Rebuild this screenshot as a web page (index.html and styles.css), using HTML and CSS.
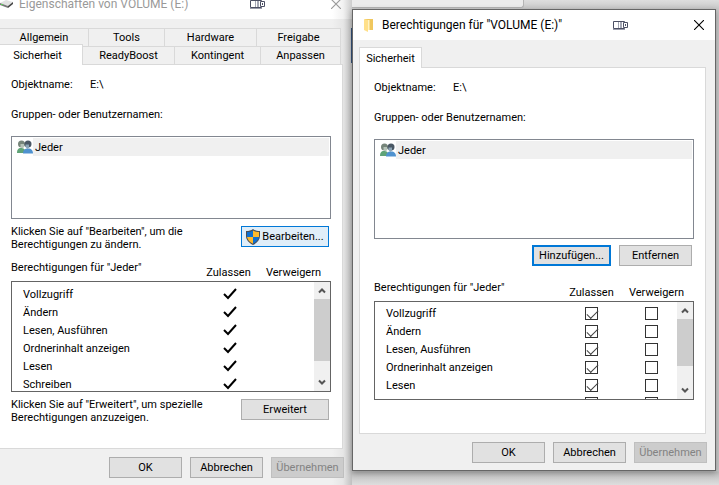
FILE: index.html
```
<!DOCTYPE html>
<html lang="de">

<head>
  <meta charset="utf-8">
  <title>Berechtigungen</title>
  <link rel="stylesheet" href="styles.css">
</head>

<body>
  <svg class="sprite" aria-hidden="true">
    <symbol id="close" viewBox="0 0 10 10">
      <path d="M0 0 10 10M10 0 0 10" fill="none" stroke="currentColor" stroke-width="1.1" />
    </symbol>
    <symbol id="dock" viewBox="0 0 16 11">
      <path d="M.5 1.500h11v7H.5z" fill="#fff" stroke="#4c5064" />
      <path d="M5 2h1v6H5zM7 2h2v6H7z" fill="#a5a8b5" />
      <path d="M0 9h12v1H0z" fill="#9b9dab" />
      <path d="M10.500 2.500h4v5h-4z" fill="#fff" stroke="#4c5064" />
      <path d="M12 4h1v2h-1z" fill="#4c5064" />
    </symbol>
    <symbol id="users" viewBox="0 0 16 14">
      <path d="M0 13c0-3 1-5 4-5s5 2 5 5z" fill="#5fa377" />
      <circle cx="4.500" cy="4" r="3.500" fill="#76857a" />
      <path d="M3.500 4h3.500v3l-1.500 1.500-2-1.500z" fill="#b5c3b8" />
      <path d="M6 13.500c0-3 1.500-5 5-5s5 2 5 5z" fill="#4f92cf" />
      <circle cx="11" cy="4" r="3.500" fill="#4a5865" />
      <path d="M8.500 4.500h3.500v3l-1.500 1.500-2-2z" fill="#8ba4b5" />
    </symbol>
    <symbol id="up" viewBox="0 0 8 7">
      <path d="M1 5.500 4 2.500 7 5.500" fill="none" stroke="#555" stroke-width="2" />
    </symbol>
    <symbol id="down" viewBox="0 0 8 7">
      <path d="M1 1.500 4 4.500 7 1.500" fill="none" stroke="#555" stroke-width="2" />
    </symbol>
    <symbol id="check" viewBox="0 0 14 12">
      <path d="M1 6 5 10 13 1" fill="none" stroke="#000" stroke-width="2" />
    </symbol>
  </svg>

  <main class="desktop">
    <section class="window inactive">
      <header class="titlebar">
        <svg class="drive" viewBox="0 0 13 8" aria-hidden="true">
          <path d="M0 3 6 0l7 2-5 4z" fill="#e2e2e2" />
          <path d="M0 3 8 6v2L0 5z" fill="#777" />
          <path d="M8 6 13 2v2L8 8z" fill="#444" />
          <path d="M1 4.500h2" stroke="#5bd05b" />
        </svg>
        <h1>Eigenschaften von VOLUME (E:)</h1>
        <svg class="dock" aria-hidden="true"><use href="#dock" /></svg>
        <button class="close" aria-label="Schließen"><svg><use href="#close" /></svg></button>
      </header>
      <div class="tabs">
        <div class="tab-row back">
          <button class="tab">Allgemein</button>
          <button class="tab">Tools</button>
          <button class="tab">Hardware</button>
          <button class="tab">Freigabe</button>
        </div>
        <div class="tab-row front">
          <button class="tab active">Sicherheit</button>
          <button class="tab">ReadyBoost</button>
          <button class="tab">Kontingent</button>
          <button class="tab">Anpassen</button>
        </div>
      </div>
      <div class="panel">
        <div class="object"><span>Objektname:</span><span>E:\</span></div>
        <p class="caption">Gruppen- oder Benutzernamen:</p>
        <ul class="users">
          <li><svg aria-hidden="true"><use href="#users" /></svg><span>Jeder</span></li>
        </ul>
        <div class="hint">
          <p>Klicken Sie auf "Bearbeiten", um die Berechtigungen zu ändern.</p>
          <button class="btn wide hover">
            <svg class="shield" viewBox="0 0 14 16" aria-hidden="true">
              <path d="M7 0c2 1.500 4 2 7 2v5c0 4-3 7-7 9-4-2-7-5-7-9V2c3 0 5-.5 7-2z" fill="#4a4f57" />
              <path d="M7 1.500V8H1V3c2.500 0 4-.5 6-1.500z" fill="#0f6fd0" />
              <path d="M7 1.500V8h6V3c-2.500 0-4-.5-6-1.500z" fill="#fdb92c" />
              <path d="M1 8h6v6.700C4 13.200 1.500 11 1 8z" fill="#fdb92c" />
              <path d="M13 8H7v6.700C10 13.200 12.500 11 13 8z" fill="#0f6fd0" />
            </svg>
            Bearbeiten...
          </button>
        </div>
        <div class="perm-head">
          <span class="perm-title">Berechtigungen für "Jeder"</span>
          <span class="col">Zulassen</span>
          <span class="col">Verweigern</span>
        </div>
        <div class="perm-box">
          <table aria-label="Berechtigungen für Jeder">
            <tr><th scope="row">Vollzugriff</th><td><svg class="check"><use href="#check" /></svg></td><td></td></tr>
            <tr><th scope="row">Ändern</th><td><svg class="check"><use href="#check" /></svg></td><td></td></tr>
            <tr><th scope="row">Lesen, Ausführen</th><td><svg class="check"><use href="#check" /></svg></td><td></td></tr>
            <tr><th scope="row">Ordnerinhalt anzeigen</th><td><svg class="check"><use href="#check" /></svg></td><td></td></tr>
            <tr><th scope="row">Lesen</th><td><svg class="check"><use href="#check" /></svg></td><td></td></tr>
            <tr><th scope="row">Schreiben</th><td><svg class="check"><use href="#check" /></svg></td><td></td></tr>
          </table>
          <div class="scrollbar">
            <button aria-label="Nach oben"><svg><use href="#up" /></svg></button>
            <div class="track"><div class="thumb"></div></div>
            <button aria-label="Nach unten"><svg><use href="#down" /></svg></button>
          </div>
        </div>
        <div class="hint">
          <p>Klicken Sie auf "Erweitert", um spezielle Berechtigungen anzuzeigen.</p>
          <button class="btn wide">Erweitert</button>
        </div>
      </div>
      <footer class="actions">
        <button class="btn">OK</button>
        <button class="btn">Abbrechen</button>
        <button class="btn" disabled>Übernehmen</button>
      </footer>
    </section>

    <div class="backdrop">
      <section class="window dialog">
        <header class="titlebar">
          <svg class="folder" viewBox="0 0 10 14" aria-hidden="true">
            <path d="M1 1h8v11H1z" fill="#f0c75e" />
            <path d="M0 1l4 1v12l-4-2z" fill="#ffe08a" />
            <path d="M4 2h1.500v10H4z" fill="#fff3c4" />
          </svg>
          <h1>Berechtigungen für "VOLUME (E:)"</h1>
          <svg class="dock" aria-hidden="true"><use href="#dock" /></svg>
          <button class="close" aria-label="Schließen"><svg><use href="#close" /></svg></button>
        </header>
        <div class="tabs">
          <div class="tab-row">
            <button class="tab active">Sicherheit</button>
          </div>
        </div>
        <div class="panel">
          <div class="object"><span>Objektname:</span><span>E:\</span></div>
          <p class="caption">Gruppen- oder Benutzernamen:</p>
          <ul class="users">
            <li><svg aria-hidden="true"><use href="#users" /></svg><span>Jeder</span></li>
          </ul>
          <div class="edit">
            <button class="btn default">Hinzufügen...</button>
            <button class="btn">Entfernen</button>
          </div>
          <div class="perm-head">
            <span class="perm-title">Berechtigungen für "Jeder"</span>
            <span class="col">Zulassen</span>
            <span class="col">Verweigern</span>
          </div>
          <div class="perm-box">
            <table aria-label="Berechtigungen für Jeder">
              <tr><th scope="row">Vollzugriff</th><td><input type="checkbox" aria-label="Vollzugriff zulassen" checked></td><td><input type="checkbox" aria-label="Vollzugriff verweigern"></td></tr>
              <tr><th scope="row">Ändern</th><td><input type="checkbox" aria-label="Ändern zulassen" checked></td><td><input type="checkbox" aria-label="Ändern verweigern"></td></tr>
              <tr><th scope="row">Lesen, Ausführen</th><td><input type="checkbox" aria-label="Lesen, Ausführen zulassen" checked></td><td><input type="checkbox" aria-label="Lesen, Ausführen verweigern"></td></tr>
              <tr><th scope="row">Ordnerinhalt anzeigen</th><td><input type="checkbox" aria-label="Ordnerinhalt anzeigen zulassen" checked></td><td><input type="checkbox" aria-label="Ordnerinhalt anzeigen verweigern"></td></tr>
              <tr><th scope="row">Lesen</th><td><input type="checkbox" aria-label="Lesen zulassen" checked></td><td><input type="checkbox" aria-label="Lesen verweigern"></td></tr>
              <tr><th scope="row"></th><td><input type="checkbox" aria-label="Schreiben zulassen"></td><td><input type="checkbox" aria-label="Schreiben verweigern"></td></tr>
            </table>
            <div class="scrollbar">
              <button aria-label="Nach oben"><svg><use href="#up" /></svg></button>
              <div class="track"><div class="thumb"></div></div>
              <button aria-label="Nach unten"><svg><use href="#down" /></svg></button>
            </div>
          </div>
        </div>
        <footer class="actions">
          <button class="btn">OK</button>
          <button class="btn">Abbrechen</button>
          <button class="btn" disabled>Übernehmen</button>
        </footer>
      </section>
    </div>
  </main>
</body>

</html>
```
FILE: styles.css
```
/* reset */
* {
  margin: 0;
  padding: 0;
  box-sizing: border-box;
}

ul {
  list-style: none;
}

body {
  font: 11px/13px Roboto, "Liberation Sans", sans-serif;
  color: #000;
  background: #d9d9d9;
}

button {
  font: inherit;
  color: inherit;
}

svg {
  display: block;
  flex: none;
}

.sprite {
  display: none;
}

.desktop {
  display: grid;
  grid-template-columns: 352fr 367fr;
  height: 100vh;
  overflow: hidden;
}

.window {
  display: flex;
  flex-direction: column;
  background: #f0f0f0;
}

/* the left window hangs over the top edge of the screen */
.inactive {
  margin-top: -11px;
  padding-right: 8px;
  background: linear-gradient(to left, #c0c0c0, #e6e6e6 9px, #f0f0f0 20px);
}

.backdrop {
  position: relative;
  padding: 9px 3px 0 0;
  background: linear-gradient(#dedede, #c8c8c8 9px, #c8c8c8 471px, #bdbdbd 472px, #dedede);
}

/* corner of a window behind the dialog */
.backdrop::before {
  content: "";
  position: absolute;
  top: 0;
  left: 0;
  width: 171px;
  height: 7px;
  border: solid #b5b5b5;
  border-width: 0 1px 1px 0;
  border-bottom-right-radius: 3px;
  background: #ececec;
}

.backdrop::after {
  content: "";
  position: absolute;
  top: 28px;
  left: -1px;
  width: 1px;
  height: 35px;
  background: #2c4568;
}

.dialog {
  position: relative;
  border: 1px solid #666;
  box-shadow: 0 2px 6px rgba(0, 0, 0, 0.3);
}

/* title bar */
.titlebar {
  display: flex;
  align-items: center;
  height: 30px;
  background: #fff;
}

.titlebar h1 {
  font: 12px/16px Roboto, "Noto Sans", sans-serif;
  white-space: nowrap;
}

.inactive .titlebar {
  margin-right: -8px;
  background: linear-gradient(to left, #cdcdcd, #f2f2f2 9px, #fff 20px);
  color: #999;
}

.drive {
  width: 13px;
  height: 8px;
  margin-right: 6px;
}

.folder {
  width: 10px;
  height: 14px;
  margin: 0 8px 0 11px;
}

.dock {
  width: 16px;
  height: 11px;
  margin-left: auto;
}

.close {
  display: flex;
  justify-content: center;
  align-items: center;
  width: 32px;
  height: 30px;
  margin-left: 54px;
  border: 0;
  background: none;
}

.close svg {
  width: 10px;
  height: 10px;
}

/* tabs */
.tabs {
  padding: 9px 3px 0 0;
}

.tab-row {
  display: grid;
}

.tab-row.back {
  grid-template-columns: 89fr 76fr 92fr 84fr;
}

.tab-row.front {
  grid-template-columns: 83fr 92fr 86fr 80fr;
}

.tab {
  height: 18px;
  border: 1px solid #d9d9d9;
  border-width: 1px 1px 0 0;
  background: #f0f0f0;
}

.tab.active {
  height: 21px;
  margin: -2px 0 -1px;
  padding-right: 7px;
  position: relative;
  background: #fff;
}

.panel {
  padding: 13px 11px 0;
  border: 1px solid #d9d9d9;
  border-left: 0;
  background: #fff;
}

.inactive .panel {
  flex: none;
  height: 385px;
  margin-right: 1px;
}

.dialog .tabs {
  padding: 7px 9px 0 6px;
}

.dialog .tab.active {
  width: 63px;
  margin-top: 0;
  padding: 0;
  border-left-width: 1px;
}

.dialog .panel {
  margin: 0 9px 0 6px;
  padding: 13px 11px 33px 14px;
  border-left: 1px solid #d9d9d9;
}

/* panel content */
.object {
  display: flex;
  margin-bottom: 17px;
}

.object span:first-child {
  width: 79px;
}

.caption {
  margin-bottom: 15px;
}

.users {
  height: 83px;
  padding: 1px;
  border: 1px solid #828790;
}

.dialog .users {
  height: 100px;
}

.users li {
  display: flex;
  align-items: center;
  height: 18px;
  padding-left: 4px;
}

.users li svg {
  width: 16px;
  height: 14px;
}

.users li span {
  flex: 1;
  padding: 3px 2px 2px;
  background: #f0f0f0;
}

.hint {
  display: flex;
  justify-content: space-between;
  align-items: center;
  height: 35px;
  padding-right: 2px;
}

.hint p {
  width: 208px;
  padding-top: 3px;
}

.btn {
  display: flex;
  justify-content: center;
  align-items: center;
  width: 73px;
  height: 21px;
  border: 1px solid #adadad;
  background: #e1e1e1;
  white-space: nowrap;
}

.btn.wide {
  width: 88px;
}

.btn.hover {
  border-color: #0078d7;
  background: #e0eef9;
}

.btn.default {
  width: 79px;
  border: 2px solid #0078d7;
}

.btn:disabled {
  border-color: #bfbfbf;
  background: #ccc;
  color: #838383;
}

.shield {
  width: 14px;
  height: 16px;
  margin-right: 2px;
}

.edit {
  display: flex;
  justify-content: flex-end;
  gap: 8px;
  padding: 6px 2px 14px 0;
}

.perm-head {
  display: flex;
  height: 27px;
  padding: 7px 5px 0 0;
}

.dialog .perm-head {
  height: 21px;
  padding-top: 1px;
}

.perm-title {
  flex: 1;
}

.col {
  width: 65px;
  padding-top: 5px;
  text-align: center;
}

.perm-box {
  display: flex;
  height: 111px;
  border: 1px solid #646464;
  overflow: hidden;
}

.dialog .perm-box {
  height: 99px;
}

.perm-box table {
  flex: 1;
  height: 108px;
  margin-top: 3px;
  border-collapse: collapse;
}

.dialog .perm-box table {
  margin-top: 2px;
}

.perm-box th {
  height: 18px;
  padding-left: 11px;
  font-weight: normal;
  text-align: left;
}

.perm-box td {
  width: 64px;
}

.dialog .perm-box td {
  width: 68px;
}

.perm-box td:last-child,
.dialog .perm-box td:last-child {
  width: 52px;
}

.perm-box td > * {
  display: block;
  margin: 0 auto;
}

.check {
  width: 14px;
  height: 12px;
}

input[type="checkbox"] {
  appearance: none;
  width: 13px;
  height: 13px;
  border: 1px solid #333;
  background: #fff;
}

input[type="checkbox"]:checked::before {
  content: "";
  display: block;
  width: 10px;
  height: 5px;
  margin: 2px 1px;
  border: solid #444;
  border-width: 0 0 1px 1px;
  transform: rotate(-45deg);
}

.scrollbar {
  display: flex;
  flex-direction: column;
  width: 16px;
  background: #f0f0f0;
}

.scrollbar button {
  display: flex;
  justify-content: center;
  align-items: center;
  height: 17px;
  border: 0;
  background: none;
}

.scrollbar svg {
  width: 8px;
  height: 7px;
}

.track {
  flex: 1;
}

.thumb {
  height: 62px;
  background: #cdcdcd;
}

.dialog .thumb {
  height: 47px;
}

.actions {
  display: flex;
  justify-content: flex-end;
  gap: 8px;
  padding: 8px 0 7px;
}

.dialog .actions {
  padding-right: 8px;
}
```
